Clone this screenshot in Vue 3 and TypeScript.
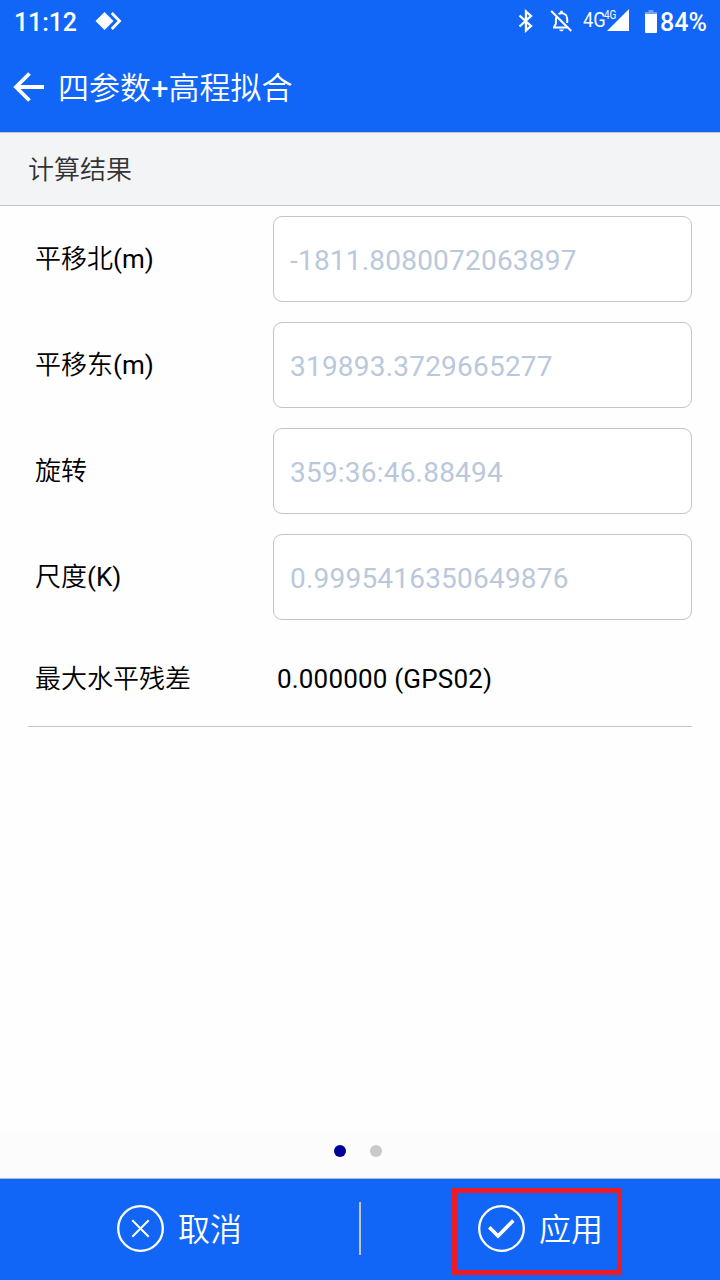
<script setup lang="ts">
interface Field {
  label: string
  unit?: string
  value: string
}

const fields: Field[] = [
  { label: '平移北', unit: '(m)', value: '-1811.8080072063897' },
  { label: '平移东', unit: '(m)', value: '319893.3729665277' },
  { label: '旋转', value: '359:36:46.88494' },
  { label: '尺度', unit: '(K)', value: '0.9995416350649876' },
]
</script>

<template>
  <div class="screen">
    <div class="status">
      <span class="clock">11:12</span>
      <svg class="app-mark" width="28" height="20" viewBox="0 0 28 20">
        <path d="M0.5 10 L9.5 1 L18.5 10 L9.5 19Z" fill="#fff" />
        <path d="M16.8 2 L24.5 10 L16.8 18" fill="none" stroke="#fff" stroke-width="2.8" />
      </svg>
      <div class="spacer"></div>
      <svg class="bluetooth" width="16" height="24" viewBox="0 0 16 24">
        <path d="M1.5 6.5 L13 17 L8 21.5 V2.5 L13 7 L1.5 17.5" fill="none" stroke="#fff" stroke-width="2.3" />
      </svg>
      <svg class="bell" width="24" height="24" viewBox="0 0 24 24">
        <path d="M6.2 8 C5.8 10 6 13 5.8 15 L4 18 V18.5 H17 M8.5 5 C9.2 4.5 10.2 4.2 11.5 4.2 C15 4.2 17.2 6.6 17.2 10 V14" fill="none" stroke="#fff" stroke-width="2" />
        <path d="M10.2 1.8 H12.8 V4.5 H10.2Z M9.2 20.4 H13.8 C13.6 22.8 9.4 22.8 9.2 20.4Z" fill="#fff" />
        <path d="M1.2 2 L21.2 22" stroke="#fff" stroke-width="2" />
      </svg>
      <div class="signal">
        <span class="net">4G</span>
        <span class="net-small">4G</span>
        <svg class="bars" width="22" height="22" viewBox="0 0 22 22">
          <path d="M22 0 V22 H0Z" fill="#fff" />
        </svg>
      </div>
      <svg class="battery" width="12" height="23" viewBox="0 0 12 23">
        <path d="M3.5 0 H8.5 V2 H12 V5 H0 V2 H3.5Z" fill="#70a1fb" />
        <path d="M0 4 H12 V22 Q12 23 11 23 H1 Q0 23 0 22Z" fill="#fff" />
      </svg>
      <span class="percent">84%</span>
    </div>

    <header class="header">
      <svg class="back" width="32" height="32" viewBox="0 0 32 32">
        <path d="M31 16 H3 M16.5 2.5 L3 16 L16.5 29.5" fill="none" stroke="#fff" stroke-width="3.8" />
      </svg>
      <h1 class="title">四参数<span class="latin">+</span>高程拟合</h1>
    </header>

    <div class="section">计算结果</div>

    <main class="content">
      <div v-for="field in fields" :key="field.label" class="row">
        <span class="label">{{ field.label }}<span v-if="field.unit" class="latin">{{ field.unit }}</span></span>
        <div class="box">{{ field.value }}</div>
      </div>
      <div class="summary">
        <span class="label">最大水平残差</span>
        <span class="residual">0.000000 (GPS02)</span>
      </div>
    </main>

    <div class="pager">
      <i class="dot active"></i>
      <i class="dot"></i>
    </div>

    <footer class="footer">
      <div class="action cancel">
        <svg width="48" height="48" viewBox="0 0 48 48" fill="none" stroke="#fff">
          <circle cx="24.5" cy="23.5" r="22.3" stroke-width="2.3" />
          <path d="M16.3 15.3 L32.7 31.7 M32.7 15.3 L16.3 31.7" stroke-width="2" />
        </svg>
        <span class="action-text">取消</span>
      </div>
      <div class="rule"></div>
      <div class="action apply">
        <svg width="48" height="48" viewBox="0 0 48 48" fill="none" stroke="#fff">
          <circle cx="24.5" cy="23.5" r="22.3" stroke-width="2.3" />
          <path d="M12.3 22.2 L21 30.9 L36.3 15.6" stroke-width="3.6" />
        </svg>
        <span class="action-text">应用</span>
      </div>
    </footer>
  </div>
</template>

<style>
body {
  margin: 0;
  background: #fefefe;
}
</style>

<style scoped>
.screen {
  width: 720px;
  height: 1280px;
  display: flex;
  flex-direction: column;
  overflow: hidden;
  background: #fefefe;
  color: #000;
  font-family: Roboto, "Noto Sans CJK SC", sans-serif;
}

.latin {
  font-weight: 400;
}

.status {
  height: 44px;
  flex: none;
  display: flex;
  align-items: center;
  box-sizing: border-box;
  padding: 0 14px 2px 14px;
  background: #1166f8;
  color: #fff;
}

.clock,
.percent {
  font-size: 25px;
  font-weight: 500;
  line-height: 30px;
  margin-top: 3px;
}

.clock {
  width: 63px;
  letter-spacing: -0.1px;
}

.app-mark {
  margin-left: 18px;
}

.spacer {
  flex: 1;
}

.bell {
  margin-left: 16px;
}

.signal {
  position: relative;
  width: 47px;
  height: 24px;
  margin-left: 9px;
}

.net {
  position: absolute;
  left: 0;
  top: -1px;
  font-size: 21px;
  line-height: 24px;
  transform: scaleX(0.87);
  transform-origin: left;
}

.net-small {
  position: absolute;
  left: 21px;
  top: -2px;
  font-size: 12px;
  line-height: 16px;
  transform: scaleX(0.83);
  transform-origin: left;
}

.bars {
  position: absolute;
  right: 1px;
  bottom: 2px;
}

.battery {
  margin-left: 15px;
}

.percent {
  width: 46px;
  margin-left: 3px;
}

.header {
  height: 88px;
  flex: none;
  display: flex;
  align-items: center;
  box-sizing: border-box;
  padding: 0 0 2px 13px;
  background: #1166f8;
  color: #fff;
}

.title {
  margin: 4px 0 0 13px;
  font-size: 31px;
  font-weight: 350;
  line-height: 40px;
}

.section {
  height: 74px;
  flex: none;
  box-sizing: border-box;
  padding-left: 28px;
  border-top: 1px solid #c4c4c4;
  border-bottom: 1px solid #c4c4c4;
  background: #f3f4f6;
  color: #333;
  font-size: 26px;
  font-weight: 350;
  line-height: 75px;
}

.content {
  flex: 1;
  padding: 10px 28px 0;
}

.row {
  display: flex;
  align-items: center;
  height: 86px;
  margin-bottom: 20px;
}

.label {
  width: 238px;
  flex: none;
  padding-left: 7px;
  font-size: 26px;
  font-weight: 350;
  line-height: 40px;
}

.box {
  flex: 1;
  height: 86px;
  box-sizing: border-box;
  padding-left: 16px;
  border: 1px solid #c4c4c4;
  border-radius: 9px;
  background: #fff;
  color: #bac8dc;
  font-size: 28px;
  line-height: 87px;
  letter-spacing: 0.21px;
}

.summary {
  display: flex;
  align-items: center;
  box-sizing: border-box;
  height: 87px;
  padding-bottom: 8px;
  border-bottom: 1px solid #c4c4c4;
}

.residual {
  margin-left: 4px;
  font-size: 26px;
  line-height: 40px;
  letter-spacing: 0.18px;
}

.pager {
  height: 45px;
  flex: none;
  display: flex;
  justify-content: center;
  gap: 24px;
  box-sizing: border-box;
  padding: 12px 4px 0 0;
  background: #fcfcfc;
}

.dot {
  width: 12px;
  height: 12px;
  border-radius: 50%;
  background: #c9c9c9;
}

.dot.active {
  background: #000099;
}

.footer {
  height: 102px;
  flex: none;
  display: flex;
  box-sizing: border-box;
  border-top: 1px solid #b5b9c2;
  background: #1166f8;
  color: #fff;
}

.action {
  display: flex;
  align-items: center;
  box-sizing: border-box;
}

.action svg {
  flex: none;
}

.action-text {
  margin: 3px 0 0 14px;
  font-size: 32px;
  font-weight: 350;
  line-height: 40px;
}

.cancel {
  width: 359px;
  height: 99px;
  padding-left: 116px;
}

.rule {
  width: 2px;
  height: 53px;
  margin-top: 23px;
  background: #c4c4c4;
}

.apply {
  width: 170px;
  height: 87px;
  margin: 9px 0 0 91px;
  padding: 0 0 6px 20px;
  border: 5px solid #ed1c24;
}
</style>
